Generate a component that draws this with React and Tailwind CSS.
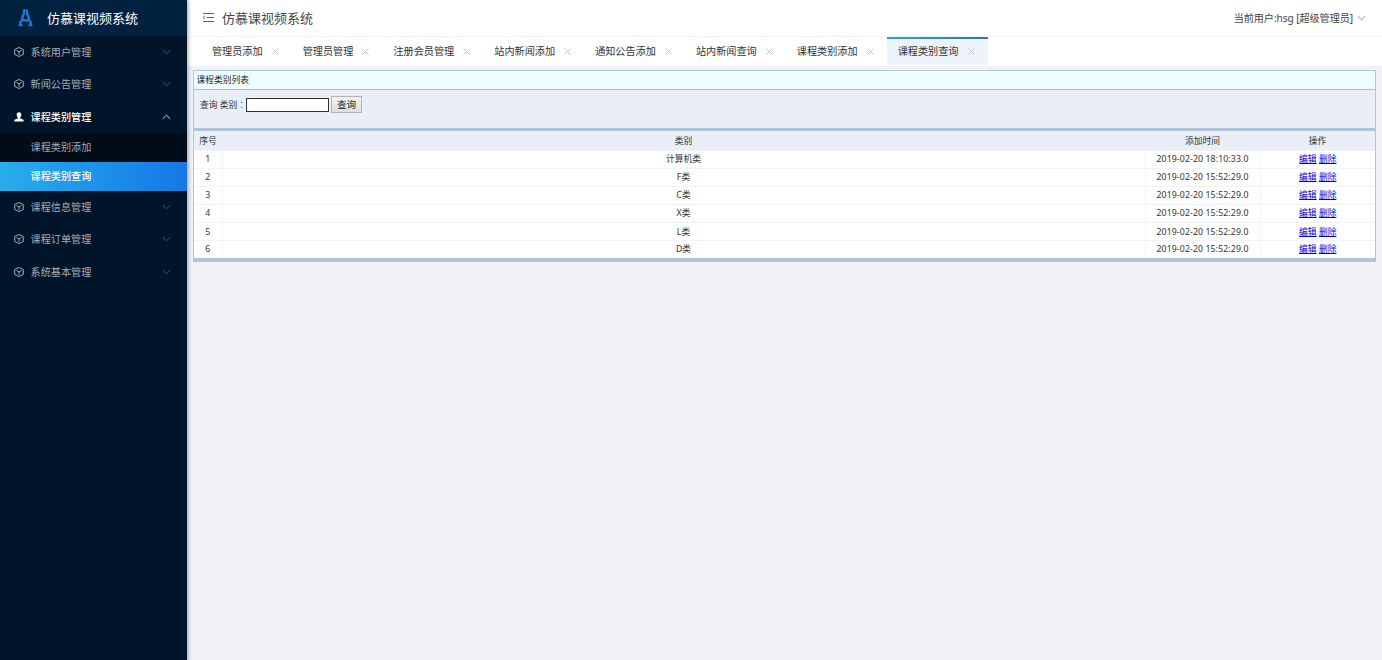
import React, { useState } from 'react';

const menus = [
  { name: '系统用户管理' },
  { name: '新闻公告管理' },
  { name: '课程类别管理', children: ['课程类别添加', '课程类别查询'] },
  { name: '课程信息管理' },
  { name: '课程订单管理' },
  { name: '系统基本管理' },
];

const tabs = [
  '管理员添加',
  '管理员管理',
  '注册会员管理',
  '站内新闻添加',
  '通知公告添加',
  '站内新闻查询',
  '课程类别添加',
  '课程类别查询',
];

const rows = [
  { id: 1, name: '计算机类', time: '2019-02-20 18:10:33.0' },
  { id: 2, name: 'F类', time: '2019-02-20 15:52:29.0' },
  { id: 3, name: 'C类', time: '2019-02-20 15:52:29.0' },
  { id: 4, name: 'X类', time: '2019-02-20 15:52:29.0' },
  { id: 5, name: 'L类', time: '2019-02-20 15:52:29.0' },
  { id: 6, name: 'D类', time: '2019-02-20 15:52:29.0' },
];

function Logo() {
  return (
    <svg className="w-[15px] h-[18px]" viewBox="0 0 15 18" fill="none" stroke="#2478dc">
      <path d="M5 1.6h5M5.9 2v4M9.1 2v4" strokeWidth="2.2" />
      <path d="M5.2 5.5L3.4 12.5M9.8 5.5l1.8 7M4 11.4h7" strokeWidth="2.4" />
      <path d="M2.4 12v5M12.6 12v5" strokeWidth="2.4" />
      <path d="M.6 16.3h4M10.4 16.3h4" strokeWidth="1.8" />
    </svg>
  );
}

function CubeIcon() {
  return (
    <svg className="w-[10px] h-[10px]" viewBox="0 0 10 10" fill="none" stroke="currentColor" strokeWidth="1" strokeLinejoin="round">
      <path d="M5 .5L9.3 2.5V7.4L5 9.5L.7 7.4V2.5Z" />
      <path d="M2.4 3.5L5 4.9L7.6 3.5M5 4.9V7.8" />
    </svg>
  );
}

function UserIcon() {
  return (
    <svg className="w-[10px] h-[10px]" viewBox="0 0 10 10" fill="currentColor">
      <path d="M5 .3C6.7.3 7.4 1.5 7.3 3C7.2 4.3 6.7 5.1 6.2 5.6V6.6L9 7.6C9.5 7.8 9.7 8.3 9.7 9.5H.3C.3 8.3.5 7.8 1 7.6L3.8 6.6V5.6C3.3 5.1 2.8 4.3 2.7 3C2.6 1.5 3.3.3 5 .3Z" />
    </svg>
  );
}

function Arrow({ up }) {
  return (
    <svg className="w-[9px] h-[6px]" viewBox="0 0 9 6" fill="none" stroke="currentColor" strokeWidth="1">
      <path d={up ? 'M.8 4.8L4.5 1.2L8.2 4.8' : 'M.8 1.2L4.5 4.8L8.2 1.2'} />
    </svg>
  );
}

function Sidebar({ active, setActive }) {
  return (
    <div className="w-[187px] shrink-0 bg-[#001529] text-[10.15px] text-[#a3adb7] shadow-[1px_0_4px_rgba(0,21,41,0.4)] z-10">
      <div className="h-9 bg-[#002140] flex items-center pl-[18px] gap-[14px]">
        <Logo />
        <span className="text-[13px] text-white">仿慕课视频系统</span>
      </div>
      {menus.map((menu) => (
        <div key={menu.name}>
          <div className={`h-[32.3px] flex items-center pl-[14px] pr-[16px] ${menu.children ? 'text-white font-medium' : ''}`}>
            {menu.children ? <UserIcon /> : <CubeIcon />}
            <span className="ml-[6.6px] flex-1">{menu.name}</span>
            <span className={menu.children ? 'text-[#d5dae0]' : 'text-[#4c5a68]'}>
              <Arrow up={!!menu.children} />
            </span>
          </div>
          {menu.children && (
            <div className="bg-[#000c17]">
              {menu.children.map((child) => (
                <div
                  key={child}
                  onClick={() => setActive(child)}
                  className={`h-[29px] flex items-center pl-[30.6px] cursor-pointer ${
                    active === child ? 'bg-linear-to-r from-[#29adeb] to-[#1778e6] text-white font-medium' : ''
                  }`}
                >
                  {child}
                </div>
              ))}
            </div>
          )}
        </div>
      ))}
    </div>
  );
}

function Tabs({ active, setActive }) {
  return (
    <div className="h-[30px] bg-white border-t border-[#f3f3f3] flex pl-[14px] text-[10.15px] text-[#333]">
      {tabs.map((tab) => (
        <div
          key={tab}
          onClick={() => setActive(tab)}
          className={`relative h-[28px] flex items-center pl-[11px] pr-[13px] cursor-pointer ${
            active === tab ? 'bg-[#eef3fa]' : ''
          }`}
        >
          {active === tab && (
            <span className="absolute left-0 top-0 w-full h-[2px] bg-linear-to-r from-[#2ba4d8] to-[#2a75b5]" />
          )}
          {tab}
          <svg className="ml-[9.1px] w-[7px] h-[7px]" viewBox="0 0 7 7" stroke="#c4c4c4" strokeWidth="1">
            <path d="M.5 .5L6.5 6.5M6.5 .5L.5 6.5" />
          </svg>
        </div>
      ))}
    </div>
  );
}

function CategoryList() {
  return (
    <div className="mt-1 ml-[6px] mr-[6px] border border-[#afc7d8] text-[8.75px] text-[#333]">
      <div className="h-[19px] bg-[#f0feff] border-b border-[#a9bccb] flex items-center pl-[2.5px] text-[#222]">课程类别列表</div>
      <div className="h-[38px] bg-[#e9eef8] flex items-start pt-[6px] pl-[6px]">
        <span className="w-[46px] leading-[18px] whitespace-nowrap">
          查询 类别<span className="font-['Noto_Sans_CJK_TC',sans-serif]">：</span>
        </span>
        <input className="mt-[2px] w-[83px] h-[14px] bg-white border border-[#333] outline-none" />
        <button className="ml-[2px] w-[31px] h-[17px] bg-linear-to-b from-[#f2f2f2] to-[#dfdfdf] border border-[#b4b4b4] text-[9.6px] leading-[14px] text-[#222]">
          查询
        </button>
      </div>
      <table className="w-full table-fixed border-collapse border-y-[3px] border-[#b0c4d9] text-center">
        <colgroup>
          <col className="w-[28px]" />
          <col />
          <col className="w-[115px]" />
          <col className="w-[115px]" />
        </colgroup>
        <thead>
          <tr className="h-[21px] bg-[#e9eef7]">
            <th className="p-0 pt-[2px] font-normal whitespace-nowrap">序号</th>
            <th className="p-0 pt-[2px] font-normal">类别</th>
            <th className="p-0 pt-[2px] font-normal">添加时间</th>
            <th className="p-0 pt-[2px] font-normal">操作</th>
          </tr>
        </thead>
        <tbody>
          {rows.map((row) => (
            <tr key={row.id} className="h-[18.1px] bg-white border-t border-[#f1f3f6]">
              <td className="p-0 border-r border-[#f1f3f6]">{row.id}</td>
              <td className="p-0 border-r border-[#f1f3f6]">{row.name}</td>
              <td className="p-0 border-r border-[#f1f3f6] whitespace-nowrap tracking-[0.1px]">{row.time}</td>
              <td className="p-0 text-[#0000dd]">
                <a className="underline cursor-pointer">编辑</a> <a className="underline cursor-pointer">删除</a>
              </td>
            </tr>
          ))}
        </tbody>
      </table>
    </div>
  );
}

export default function App() {
  const [active, setActive] = useState('课程类别查询');

  return (
    <div className="flex h-screen overflow-hidden bg-[#f0f2f5] leading-none font-['Noto_Sans','Noto_Sans_CJK_SC',sans-serif]">
      <Sidebar active={active} setActive={setActive} />
      <div className="flex-1 min-w-0">
        <div className="h-9 bg-white flex items-center pl-[15px] pr-[16px] text-[#444]">
          <svg className="w-[12px] h-[10px]" viewBox="0 0 12 10" fill="none" stroke="#666" strokeWidth="1">
            <path d="M1 .5h11M4.5 4.5h7.5M1 8.5h11M2.8 3L1 4.5L2.8 6" />
          </svg>
          <span className="ml-2 flex-1 text-[13px]">仿慕课视频系统</span>
          <span className="text-[10.1px] mr-[4px] tracking-[-0.05px]">当前用户:hsg [超级管理员]</span>
          <span className="text-[#888]">
            <Arrow />
          </span>
        </div>
        <Tabs active={active} setActive={setActive} />
        <CategoryList />
      </div>
    </div>
  );
}
